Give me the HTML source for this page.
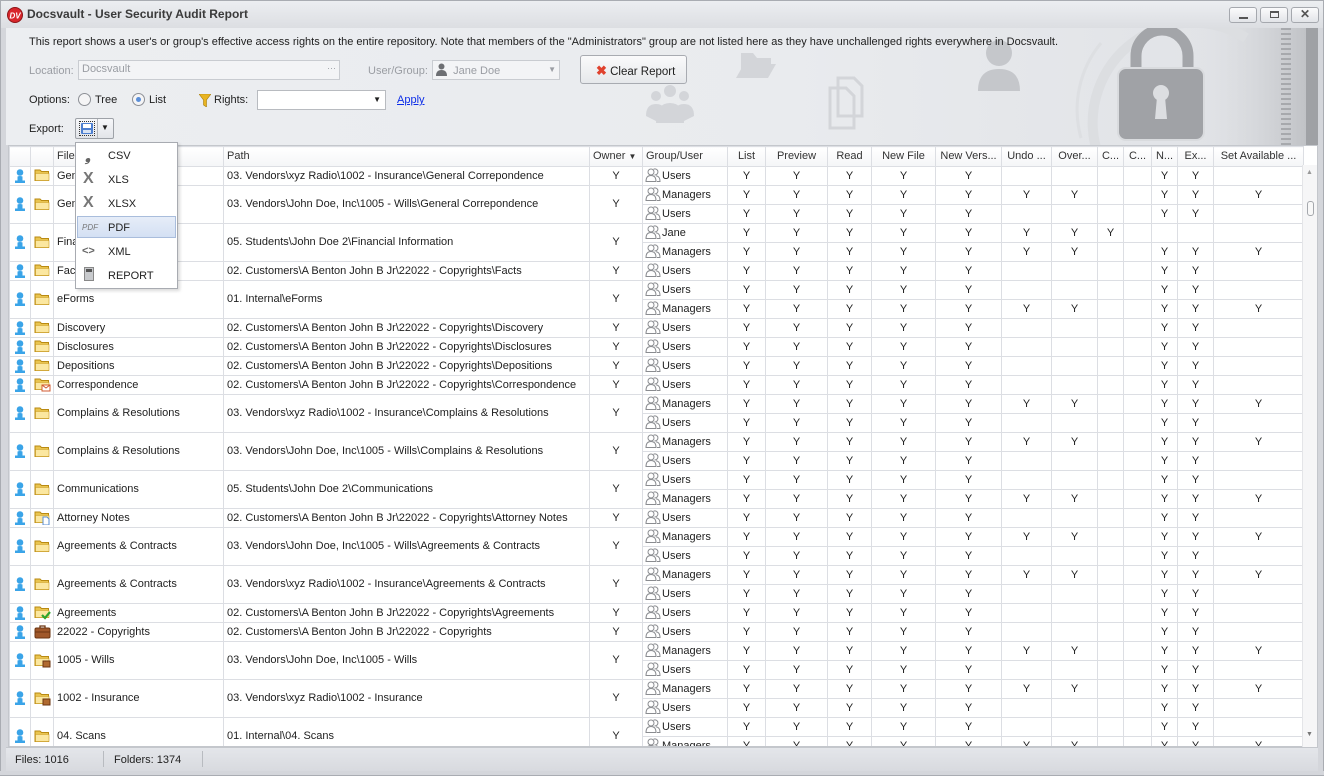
<!DOCTYPE html>
<html><head><meta charset="utf-8">
<style>
*{box-sizing:border-box;margin:0;padding:0}
body{width:1324px;height:776px;overflow:hidden;background:#d4d6db;font-family:"Liberation Sans",Arial,sans-serif;font-size:11px;color:#1e1e1e;position:relative}
.abs{position:absolute}
#title{left:0;top:0;width:1324px;height:28px;background:linear-gradient(#eceef1,#dcdee2);border:1px solid #a9acb2;border-bottom:none}
#title .t{left:26px;top:6px;font-weight:bold;font-size:12px;color:#3a3a3a}
.wb{top:6px;width:28px;height:16px;border:1px solid #a5a8ae;border-radius:3px;background:linear-gradient(#fbfbfc,#e2e4e8)}
#panel{left:6px;top:28px;width:1312px;height:117px;background:linear-gradient(90deg,#eceef1 0%,#e9ebee 60%,#dfe1e5 100%);overflow:hidden}
.lbl{color:#9a9da3}
.inp{background:#f3f4f6;border:1px solid #c9ccd1;height:20px}
#grid{left:8px;top:145px;width:1310px;height:602px;background:#fff;border:1px solid #c4c7cc;overflow:hidden}
table{border-collapse:collapse;table-layout:fixed;width:1294px}
td,th{border:1px solid #dcdee3;height:19px;padding:0 3px;white-space:nowrap;overflow:hidden;font-weight:normal;text-align:center;line-height:17px}
th{background:linear-gradient(#fff,#f4f5f7);height:20px;color:#333}
td.l,th.l{text-align:left}
td.g{text-align:left;padding-left:2px}
td.g svg{vertical-align:-3px;margin-right:1px}
td svg{display:inline-block;vertical-align:middle}
#sb{left:1302px;top:165px;width:15px;height:582px;background:#f6f6f7;border-left:1px solid #e4e5e8}
#status{left:6px;top:747px;width:1312px;height:24px;background:linear-gradient(#e4e6ea,#d8dadf);border-top:1px solid #c4c7cc}
#menu{left:75px;top:142px;width:103px;height:147px;background:#fff;border:1px solid #a8abb1;box-shadow:2px 2px 3px rgba(0,0,0,.15)}
.mi{position:absolute;left:32px;font-size:11px;color:#222}
</style></head><body>
<div id="title" class="abs">
 <svg class="abs" style="left:6px;top:6px" width="16" height="16" viewBox="0 0 16 16"><circle cx="8" cy="8" r="7.5" fill="#d8262b" stroke="#8d1518"/><text x="2.5" y="11.5" font-size="8" font-weight="bold" fill="#fff" font-style="italic" font-family="Liberation Sans">DV</text></svg>
 <div class="abs t">Docsvault - User Security Audit Report</div>
 <div class="abs wb" style="left:1228px"><div class="abs" style="left:9px;top:9px;width:9px;height:2px;background:#555"></div></div>
 <div class="abs wb" style="left:1259px"><div class="abs" style="left:9px;top:3px;width:9px;height:7px;border:1px solid #555;border-top-width:2px"></div></div>
 <div class="abs wb" style="left:1290px;text-align:center;font-weight:bold;color:#555;font-size:12px;line-height:13px">✕</div>
</div>
<div class="abs" style="left:0;top:28px;width:6px;height:748px;background:#d4d6db;border-left:1px solid #a9acb2"></div>
<div id="panel" class="abs">
 <svg class="abs" style="left:620px;top:0" width="692" height="117" viewBox="0 0 692 117">
  <defs><linearGradient id="rg" x1="0" x2="1"><stop offset="0" stop-color="#e3e5e8" stop-opacity="0"/><stop offset="1" stop-color="#b9bbbf"/></linearGradient></defs>
  <rect x="560" y="0" width="132" height="117" fill="url(#rg)"/>
  <g fill="#d3d5d9">
   <circle cx="44" cy="63" r="6"/><circle cx="30" cy="68" r="5"/><circle cx="58" cy="68" r="5"/><path d="M30 95 q0-20 14-20 q14 0 14 20z"/><path d="M20 88 q0-12 10-12 q6 0 8 4 l-6 14z"/><path d="M68 88 q0-12-10-12 q-6 0-8 4 l6 14z"/>
   <path d="M115 25 h12 l4 5 h14 v12 h-30z"/><path d="M110 50 l8-14 h32 l-8 14z"/>
   <path d="M204 60 h16 l8 8 v32 h-24z" fill="none" stroke="#d3d5d9" stroke-width="3"/><path d="M212 50 h16 l8 8 v30 h-24z" fill="none" stroke="#d3d5d9" stroke-width="3"/>
   <circle cx="373" cy="25" r="13" fill="#c5c7cb"/><path d="M352 63 q0-22 21-22 q21 0 21 22 z" fill="#c5c7cb"/>
  </g>
  <path d="M470 120 a100 100 0 0 1 150-110" fill="none" stroke="#dcdee1" stroke-width="10"/>
  <path d="M455 110 a105 105 0 0 1 20-95" fill="none" stroke="#dddfe2" stroke-width="3"/>
  <path d="M510 40 v-12 a26 26 0 0 1 52 0 v12" fill="none" stroke="#a3a5a9" stroke-width="11"/>
  <rect x="492" y="40" width="86" height="72" rx="8" fill="#a0a2a6" stroke="#d9dbde" stroke-width="2"/>
  <circle cx="535" cy="65" r="8" fill="#dcdee1"/><path d="M531 69 h8 l2 22 h-12z" fill="#dcdee1"/>
  <path d="M660 0 v117" stroke="#a7a9ad" stroke-width="10" stroke-dasharray="2 3"/>
  <rect x="680" y="0" width="12" height="117" fill="#9fa1a5"/>
 </svg>
 <div class="abs" style="left:23px;top:8px">This report shows a user's or group's effective access rights on the entire repository. Note that members of the "Administrators" group are not listed here as they have unchallenged rights everywhere in Docsvault.</div>
 <div class="abs lbl" style="left:23px;top:37px">Location:</div>
 <div class="abs inp" style="left:72px;top:32px;width:262px;color:#9a9da3;padding:2px 3px">Docsvault<span style="float:right;font-size:9px">···</span></div>
 <div class="abs lbl" style="left:362px;top:37px">User/Group:</div>
 <div class="abs inp" style="left:426px;top:32px;width:128px;color:#9a9da3;padding:2px 3px"><svg width="11" height="13" viewBox="0 0 11 13" style="vertical-align:-2px"><circle cx="5.5" cy="3.5" r="3" fill="#6d6f73"/><path d="M0 13 q0-6 5.5-6 q5.5 0 5.5 6z" fill="#6d6f73"/></svg> &nbsp;Jane Doe<span style="float:right;font-size:8px;margin-top:2px">▼</span></div>
 <div class="abs" style="left:574px;top:27px;width:107px;height:29px;border:1px solid #a8abb1;border-radius:3px;background:linear-gradient(#fafafb,#e6e8eb);padding:7px 0 0 15px;font-size:11.5px"><span style="color:#e0422e;font-weight:bold;font-size:13px">✖</span> Clear Report</div>
 <div class="abs" style="left:23px;top:66px">Options:</div>
 <div class="abs" style="left:72px;top:65px;width:13px;height:13px;border-radius:50%;border:1px solid #8d9096;background:#f5f5f6"></div>
 <div class="abs" style="left:89px;top:66px">Tree</div>
 <div class="abs" style="left:126px;top:65px;width:13px;height:13px;border-radius:50%;border:1px solid #8d9096;background:#f5f5f6"><div class="abs" style="left:3px;top:3px;width:5px;height:5px;border-radius:50%;background:#5b8fd8"></div></div>
 <div class="abs" style="left:143px;top:66px">List</div>
 <svg class="abs" style="left:193px;top:66px" width="12" height="13" viewBox="0 0 12 13"><path d="M0 0 h12 l-4.5 6 v7 l-3-2 v-5z" fill="#e8b421" stroke="#a77d0c" stroke-width=".6"/></svg>
 <div class="abs" style="left:208px;top:66px">Rights:</div>
 <div class="abs" style="left:251px;top:62px;width:129px;height:20px;background:#fff;border:1px solid #b8bbc0"><span class="abs" style="right:4px;top:4px;font-size:8px">▼</span></div>
 <div class="abs" style="left:391px;top:66px;color:#0c2de8;text-decoration:underline">Apply</div>
 <div class="abs" style="left:23px;top:95px">Export:</div>
 <div class="abs" style="left:69px;top:90px;width:39px;height:21px;border:1px solid #9ea2a8;border-radius:2px;background:linear-gradient(#f7f8fa,#e2e5e9)">
  <div class="abs" style="left:3px;top:2px;width:16px;height:15px;border:1px dotted #333"><div class="abs" style="left:1px;top:1px;width:12px;height:11px;background:#4d7fd0;border-radius:1px"></div><div class="abs" style="left:3px;top:2px;width:8px;height:4px;background:#fff"></div><div class="abs" style="left:3px;top:8px;width:8px;height:3px;background:#d8e3f3"></div></div>
  <div class="abs" style="left:21px;top:0;width:1px;height:19px;background:#b4b7bc"></div>
  <div class="abs" style="left:25px;top:4px;font-size:8px">▼</div>
 </div>
</div>
<div id="grid" class="abs">
<table>
<colgroup><col style="width:21px"><col style="width:23px"><col style="width:170px"><col style="width:366px"><col style="width:53px"><col style="width:85px"><col style="width:38px"><col style="width:62px"><col style="width:44px"><col style="width:64px"><col style="width:66px"><col style="width:50px"><col style="width:46px"><col style="width:26px"><col style="width:28px"><col style="width:26px"><col style="width:36px"><col style="width:90px"></colgroup>
<tr><th></th><th></th><th class="l">File</th><th class="l">Path</th><th class="l">Owner <span style="font-size:8px">▼</span></th><th class="l">Group/User</th><th>List</th><th>Preview</th><th>Read</th><th>New File</th><th>New Vers...</th><th>Undo ...</th><th>Over...</th><th>C...</th><th>C...</th><th>N...</th><th>Ex...</th><th>Set Available ...</th></tr>
<tbody id="tb"></tbody>
</table>
</div>
<div id="sb" class="abs"><div class="abs" style="left:3px;top:4px;font-size:7px;color:#999">▲</div><div class="abs" style="left:4px;top:36px;width:7px;height:15px;border:1px solid #a5a8ad;border-radius:3px;background:#f8f8f8"></div><div class="abs" style="left:3px;top:566px;font-size:7px;color:#777">▼</div></div>
<div id="status" class="abs">
 <div class="abs" style="left:9px;top:6px">Files: 1016</div>
 <div class="abs" style="left:97px;top:3px;width:1px;height:16px;background:#b8bbc0"></div>
 <div class="abs" style="left:108px;top:6px">Folders: 1374</div>
 <div class="abs" style="left:196px;top:3px;width:1px;height:16px;background:#b8bbc0"></div>
</div>
<div class="abs" style="left:1318px;top:28px;width:6px;height:748px;background:#d4d6db;border-right:1px solid #a9acb2"></div>
<div class="abs" style="left:0;top:771px;width:1324px;height:5px;background:#d4d6db;border-bottom:1px solid #a9acb2"></div>
<div id="menu" class="abs">
 <div class="abs" style="left:9px;top:5px;font-weight:bold;font-size:14px;color:#666;font-style:italic">❟</div><div class="mi" style="top:7px">CSV</div>
 <div class="abs" style="left:7px;top:27px;font-size:16px;color:#777;font-weight:bold">X</div><div class="mi" style="top:31px">XLS</div>
 <div class="abs" style="left:7px;top:51px;font-size:16px;color:#777;font-weight:bold">X</div><div class="mi" style="top:55px">XLSX</div>
 <div class="abs" style="left:1px;top:73px;width:99px;height:22px;background:linear-gradient(#e6edf8,#d4e0f3);border:1px solid #a9bddc"></div>
 <div class="abs" style="left:6px;top:80px;font-size:8px;color:#777;font-style:italic">PDF</div><div class="mi" style="top:79px">PDF</div>
 <div class="abs" style="left:6px;top:102px;font-size:11px;color:#666;font-weight:bold">&lt;&gt;</div><div class="mi" style="top:103px">XML</div>
 <div class="abs" style="left:8px;top:124px;width:10px;height:14px;background:#c8cacd;border:1px solid #888"><div class="abs" style="left:1px;top:1px;width:6px;height:3px;background:#555"></div></div><div class="mi" style="top:127px">REPORT</div>
</div>
<script>
var U='YYYYY____YY_',M='YYYYYYY__YYY',J='YYYYYYYY____';
var rows=[
['f','General Correpondence','03. Vendors\\xyz Radio\\1002 - Insurance\\General Correpondence',[['Users',U]]],
['f','General Correpondence','03. Vendors\\John Doe, Inc\\1005 - Wills\\General Correpondence',[['Managers',M],['Users',U]]],
['f','Financial Information','05. Students\\John Doe 2\\Financial Information',[['Jane',J],['Managers',M]]],
['f','Facts','02. Customers\\A Benton John B Jr\\22022 - Copyrights\\Facts',[['Users',U]]],
['f','eForms','01. Internal\\eForms',[['Users',U],['Managers',M]]],
['f','Discovery','02. Customers\\A Benton John B Jr\\22022 - Copyrights\\Discovery',[['Users',U]]],
['f','Disclosures','02. Customers\\A Benton John B Jr\\22022 - Copyrights\\Disclosures',[['Users',U]]],
['f','Depositions','02. Customers\\A Benton John B Jr\\22022 - Copyrights\\Depositions',[['Users',U]]],
['m','Correspondence','02. Customers\\A Benton John B Jr\\22022 - Copyrights\\Correspondence',[['Users',U]]],
['f','Complains &amp; Resolutions','03. Vendors\\xyz Radio\\1002 - Insurance\\Complains &amp; Resolutions',[['Managers',M],['Users',U]]],
['f','Complains &amp; Resolutions','03. Vendors\\John Doe, Inc\\1005 - Wills\\Complains &amp; Resolutions',[['Managers',M],['Users',U]]],
['f','Communications','05. Students\\John Doe 2\\Communications',[['Users',U],['Managers',M]]],
['d','Attorney Notes','02. Customers\\A Benton John B Jr\\22022 - Copyrights\\Attorney Notes',[['Users',U]]],
['f','Agreements &amp; Contracts','03. Vendors\\John Doe, Inc\\1005 - Wills\\Agreements &amp; Contracts',[['Managers',M],['Users',U]]],
['f','Agreements &amp; Contracts','03. Vendors\\xyz Radio\\1002 - Insurance\\Agreements &amp; Contracts',[['Managers',M],['Users',U]]],
['c','Agreements','02. Customers\\A Benton John B Jr\\22022 - Copyrights\\Agreements',[['Users',U]]],
['b','22022 - Copyrights','02. Customers\\A Benton John B Jr\\22022 - Copyrights',[['Users',U]]],
['x','1005 - Wills','03. Vendors\\John Doe, Inc\\1005 - Wills',[['Managers',M],['Users',U]]],
['x','1002 - Insurance','03. Vendors\\xyz Radio\\1002 - Insurance',[['Managers',M],['Users',U]]],
['f','04. Scans','01. Internal\\04. Scans',[['Users',U],['Managers',M]]]];
var user='<svg width="12" height="14" viewBox="0 0 12 14"><circle cx="6" cy="3.5" r="3.3" fill="#3aa4e8"/><path d="M3.5 7.5 q2.5-1 5 0 v4 h2.5 v2.5 h-10 v-2.5 h2.5z" fill="#3aa4e8"/></svg>';
function folder(t){var s='<svg width="17" height="15" viewBox="0 0 17 15">';
 if(t=='b')return s+'<rect x="1" y="4" width="15" height="10" rx="1.5" fill="#a0582a" stroke="#6b3512"/><path d="M6 4 v-2 h5 v2" fill="none" stroke="#6b3512" stroke-width="1.3"/><path d="M1 8 h15" stroke="#6b3512"/></svg>';
 s+='<path d="M1 2 h5 l1.5 1.5 h7 v9 h-13.5z" fill="#e9c44f" stroke="#b98a12"/><path d="M1.5 5.5 h13.5 v7 h-13.5z" fill="#fbe7a0" stroke="#c99a20" stroke-width=".6"/>';
 if(t=='m')s+='<rect x="8" y="8" width="8" height="6" fill="#fff" stroke="#d05a30"/><path d="M8 8 l4 3 l4-3" fill="none" stroke="#d05a30"/>';
 if(t=='d')s+='<path d="M9 7 h4 l2 2 v6 h-6z" fill="#fff" stroke="#5a8ed0"/>';
 if(t=='c')s+='<path d="M8 10 l3 3 l5-6" fill="none" stroke="#2ea52e" stroke-width="2.2"/>';
 if(t=='x')s+='<rect x="9" y="8" width="7" height="6" fill="#b06a30" stroke="#6b3512"/>';
 return s+'</svg>';}
var grp='<svg width="16" height="14" viewBox="0 0 16 14" fill="none" stroke="#8a8c90" stroke-width="1"><circle cx="6" cy="4" r="3"/><path d="M1 13.5 q0-6 5-6 q5 0 5 6z"/><path d="M8.5 1.3 a3 3 0 1 1 1 5.6 M11 7.8 q4 .5 4 5.7 h-3"/></svg>';
var h='';
rows.forEach(function(r){var n=r[3].length;r[3].forEach(function(g,i){h+='<tr>';
 if(i==0)h+='<td rowspan="'+n+'">'+user+'</td><td rowspan="'+n+'" style="padding:0 2px">'+folder(r[0])+'</td><td class="l" rowspan="'+n+'">'+r[1]+'</td><td class="l" rowspan="'+n+'">'+r[2]+'</td><td rowspan="'+n+'">Y</td>';
 h+='<td class="g">'+grp+g[0]+'</td>';
 for(var k=0;k<12;k++)h+='<td>'+(g[1][k]=='Y'?'Y':'')+'</td>';
 h+='</tr>';});});
document.getElementById('tb').innerHTML=h;
</script>
</body></html>
